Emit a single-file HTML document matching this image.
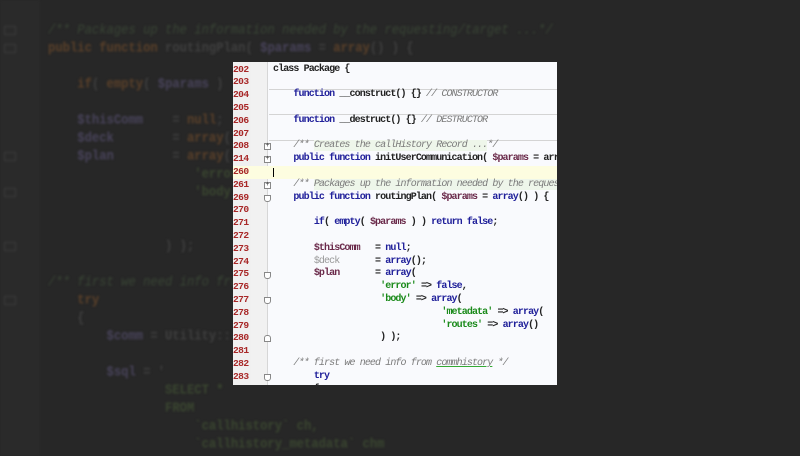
<!DOCTYPE html>
<html><head><meta charset="utf-8"><style>
*{margin:0;padding:0;box-sizing:border-box}
body{width:800px;height:456px;overflow:hidden;background:#272727;position:relative;font-family:"Liberation Mono",monospace}
#bg{position:absolute;left:0;top:0;width:800px;height:456px;filter:blur(1.1px)}
#bg .l{position:absolute;left:48px;height:18px;font-size:12.2px;line-height:18px;white-space:pre;color:#3f3f3f;font-weight:bold;transform:scaleY(1.15)}
.k{color:#5a4029}.v{color:#48435a}.c{color:#394535;font-style:italic;font-weight:normal}.s{color:#3a4630}
.gut{position:absolute;left:0;top:0;width:40px;height:456px;background:#2a2a2a}
.fold{position:absolute;left:4px;width:12px;height:9px;border:1px solid #3c3c3c;border-radius:1px}
#p{position:absolute;left:233px;top:62px;width:324px;height:323px;background:#f9fafd;overflow:hidden;font-size:10px;letter-spacing:-0.9px}
#p .g1{position:absolute;left:0;top:0;width:18px;height:323px;background:#f0f0f0}
#p .g2{position:absolute;left:18px;top:0;width:17px;height:323px;background:#f1f1f1;border-right:1px solid #d6d6d6}
#p .ln{position:absolute;left:0;width:324px;height:12.8px;line-height:12.8px;white-space:pre;margin-top:1.5px}
#p .n{position:absolute;left:0;color:#a82828;font-size:9.6px;letter-spacing:-0.6px;font-weight:bold}
#p .t{position:absolute;left:40px;color:#222;font-weight:bold}
#p .kw{color:#20209a}
#p .cm{color:#7a7a7a;font-style:italic;font-weight:normal}
#p .st{color:#1a8a1a}
#p .vr{color:#6a2a4a}
#p .vd{color:#999;font-weight:normal}
.sep{position:absolute;left:36px;width:288px;height:1px;background:#d4d4d4}
.fb{position:absolute;left:31px;width:7px;height:7px;border:1px solid #888;background:#fff;font-size:7px;line-height:5px;text-align:center;color:#333;letter-spacing:0;margin-top:1.5px}
</style></head><body>
<div id="bg">
<div class="gut"></div>
<div class="fold" style="top:26px"></div><div class="fold" style="top:44px"></div><div class="fold" style="top:152px"></div><div class="fold" style="top:188px"></div><div class="fold" style="top:242px"></div><div class="fold" style="top:296px"></div>
<div class="l" style="top:21px"><span class="c">/** Packages up the information needed by the requesting/target ...*/</span></div>
<div class="l" style="top:39px"><span class="k">public function</span> routingPlan( <span class="v">$params</span> = <span class="k">array</span>() ) {</div>
<div class="l" style="top:75px">    <span class="k">if</span>( <span class="k">empty</span>( <span class="v">$params</span> ) ) return false;</div>
<div class="l" style="top:111px">    <span class="v">$thisComm</span>    = <span class="k">null</span>;</div>
<div class="l" style="top:129px">    <span class="v">$deck</span>        = <span class="k">array</span>();</div>
<div class="l" style="top:147px">    <span class="v">$plan</span>        = <span class="k">array</span>(</div>
<div class="l" style="top:165px">                    <span class="s">'error'</span></div>
<div class="l" style="top:183px">                    <span class="s">'body'</span></div>
<div class="l" style="top:237px">                ) );</div>
<div class="l" style="top:273px"><span class="c">/** first we need info from commhistory */</span></div>
<div class="l" style="top:291px">    <span class="k">try</span></div>
<div class="l" style="top:309px">    {</div>
<div class="l" style="top:327px">        <span class="v">$comm</span> = Utility::</div>
<div class="l" style="top:363px">        <span class="v">$sql</span> = '</div>
<div class="l" style="top:381px">                <span class="s">SELECT *</span></div>
<div class="l" style="top:399px">                <span class="s">FROM</span></div>
<div class="l" style="top:417px">                    <span class="s">`callhistory` ch,</span></div>
<div class="l" style="top:435px">                    <span class="s">`callhistory_metadata` chm</span></div>
</div>
<div id="p">
<div class="g1"></div><div class="g2"></div>
<div class="ln" style="top:102.4px;background:#fdfde0"></div>
<div class="sep" style="top:27px"></div><div class="sep" style="top:52px"></div><div class="sep" style="top:78px"></div>
<div class="ln" style="top:0"><span class="n">202</span><span class="t">class Package {</span></div>
<div class="ln" style="top:12.8px"><span class="n">203</span></div>
<div class="ln" style="top:25.6px"><span class="n">204</span><span class="t">    <span class="kw">function</span> __construct() {} <span class="cm">// CONSTRUCTOR</span></span></div>
<div class="ln" style="top:38.4px"><span class="n">205</span></div>
<div class="ln" style="top:51.2px"><span class="n">206</span><span class="t">    <span class="kw">function</span> __destruct() {} <span class="cm">// DESTRUCTOR</span></span></div>
<div class="ln" style="top:64px"><span class="n">207</span></div>
<div class="ln" style="top:76.8px"><span class="n">208</span><span class="t">    <span class="cm">/** <span style="background:#eef6ea">Creates the callHistory Record ...</span>*/</span></span></div>
<div class="ln" style="top:89.6px"><span class="n">214</span><span class="t">    <span class="kw">public function</span> initUserCommunication( <span class="vr">$params</span> = array</span></div>
<div class="ln" style="top:102.4px"><span class="n">260</span><span style="position:absolute;left:40px;top:2px;width:1px;height:9px;background:#000"></span></div>
<div class="ln" style="top:115.2px"><span class="n">261</span><span class="t">    <span class="cm">/** <span style="background:#eef6ea">Packages up the information needed by the reques</span></span></span></div>
<div class="ln" style="top:128px"><span class="n">269</span><span class="t">    <span class="kw">public function</span> routingPlan( <span class="vr">$params</span> = <span class="kw">array</span>() ) {</span></div>
<div class="ln" style="top:140.8px"><span class="n">270</span></div>
<div class="ln" style="top:153.6px"><span class="n">271</span><span class="t">        <span class="kw">if</span>( <span class="kw">empty</span>( <span class="vr">$params</span> ) ) <span class="kw">return false</span>;</span></div>
<div class="ln" style="top:166.4px"><span class="n">272</span></div>
<div class="ln" style="top:179.2px"><span class="n">273</span><span class="t">        <span class="vr">$thisComm</span>   = <span class="kw">null</span>;</span></div>
<div class="ln" style="top:192px"><span class="n">274</span><span class="t">        <span class="vd">$deck</span>       = <span class="kw">array</span>();</span></div>
<div class="ln" style="top:204.8px"><span class="n">275</span><span class="t">        <span class="vr">$plan</span>       = <span class="kw">array</span>(</span></div>
<div class="ln" style="top:217.6px"><span class="n">276</span><span class="t">                     <span class="st">'error'</span> =&gt; <span class="kw">false</span>,</span></div>
<div class="ln" style="top:230.4px"><span class="n">277</span><span class="t">                     <span class="st">'body'</span> =&gt; <span class="kw">array</span>(</span></div>
<div class="ln" style="top:243.2px"><span class="n">278</span><span class="t">                                 <span class="st">'metadata'</span> =&gt; <span class="kw">array</span>(</span></div>
<div class="ln" style="top:256px"><span class="n">279</span><span class="t">                                 <span class="st">'routes'</span> =&gt; <span class="kw">array</span>()</span></div>
<div class="ln" style="top:268.8px"><span class="n">280</span><span class="t">                     ) );</span></div>
<div class="ln" style="top:281.6px"><span class="n">281</span></div>
<div class="ln" style="top:294.4px"><span class="n">282</span><span class="t">    <span class="cm">/** first we need info from <u style="text-decoration-color:#3a3">commhistory</u> */</span></span></div>
<div class="ln" style="top:307.2px"><span class="n">283</span><span class="t">        <span class="kw">try</span></span></div>
<div class="ln" style="top:320px"><span class="n">284</span><span class="t">        {</span></div>
<div class="fb" style="top:79px">+</div><div class="fb" style="top:92px">+</div><div class="fb" style="top:118px">+</div>
<div class="fb" style="top:131px;border-radius:0 0 3px 3px"></div><div class="fb" style="top:208px;border-radius:0 0 3px 3px"></div><div class="fb" style="top:233px;border-radius:0 0 3px 3px"></div><div class="fb" style="top:271px;border-radius:3px 3px 0 0"></div><div class="fb" style="top:310px;border-radius:0 0 3px 3px"></div>
</div>
</body></html>
